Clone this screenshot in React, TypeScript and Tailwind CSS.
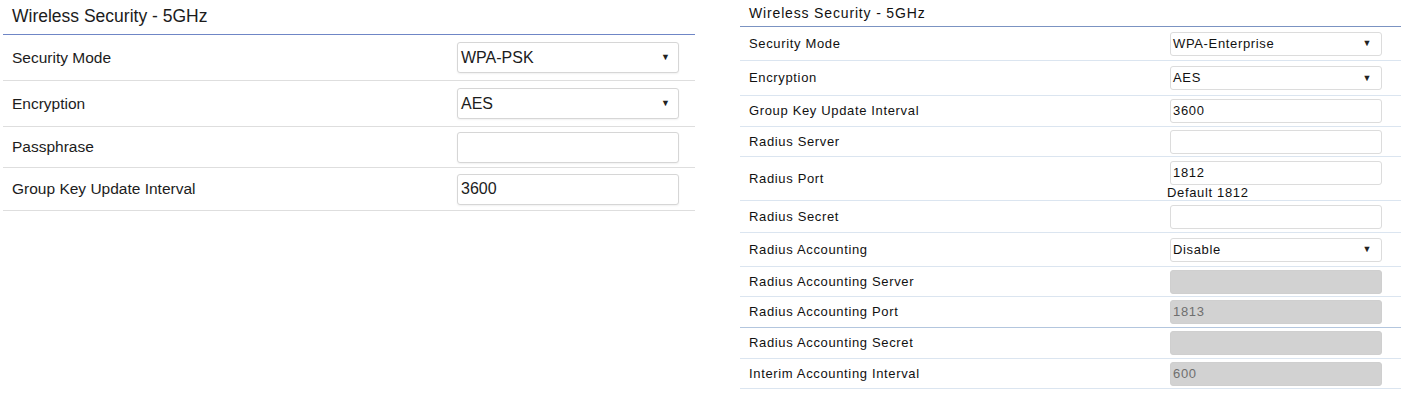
const Arrow = () => <span className="text-[9px] leading-none text-[#222]">▼</span>;

type LeftRow = { label: string; kind: "select" | "input"; value: string; h: string };

const leftRows: LeftRow[] = [
  { label: "Security Mode", kind: "select", value: "WPA-PSK", h: "h-[45px]" },
  { label: "Encryption", kind: "select", value: "AES", h: "h-[45px]" },
  { label: "Passphrase", kind: "input", value: "", h: "h-[40px]" },
  { label: "Group Key Update Interval", kind: "input", value: "3600", h: "h-[42px]" },
];

type RightRow = {
  label: string;
  kind: "select" | "input" | "disabled";
  value: string;
  h: string;
  note?: string;
  line?: string;
};

const rightRows: RightRow[] = [
  { label: "Security Mode", kind: "select", value: "WPA-Enterprise", h: "h-[33px]" },
  { label: "Encryption", kind: "select", value: "AES", h: "h-[34px]" },
  { label: "Group Key Update Interval", kind: "input", value: "3600", h: "h-[30px]" },
  { label: "Radius Server", kind: "input", value: "", h: "h-[29px]" },
  { label: "Radius Port", kind: "input", value: "1812", h: "h-[43px]", note: "Default 1812" },
  { label: "Radius Secret", kind: "input", value: "", h: "h-[31px]" },
  { label: "Radius Accounting", kind: "select", value: "Disable", h: "h-[33px]" },
  { label: "Radius Accounting Server", kind: "disabled", value: "", h: "h-[29px]" },
  { label: "Radius Accounting Port", kind: "disabled", value: "1813", h: "h-[30px]", line: "border-[#b3c6de]" },
  { label: "Radius Accounting Secret", kind: "disabled", value: "", h: "h-[30px]" },
  { label: "Interim Accounting Interval", kind: "disabled", value: "600", h: "h-[29px]" },
];

const LeftPanel = () => (
  <div className="ml-[3px] w-[692px] text-[#1c1c1c]">
    <div className="flex h-[35px] items-center border-b border-[#6f86c6] pb-[1px] pl-[9px] text-[17.5px]">
      Wireless Security - 5GHz
    </div>
    {leftRows.map((r) => (
      <div
        key={r.label}
        className={`flex items-center border-b border-[#dedede] pl-[9px] text-[15.5px] ${r.h} box-content`}
      >
        <div className="flex-1">{r.label}</div>
        <div className="mr-[16px] flex h-[31px] w-[222px] items-center justify-between rounded-[3px] border border-[#d6d6d6] bg-white pl-[3px] pr-[8px] text-[16px] shadow-[0_1px_2px_rgba(0,0,0,0.06)]">
          <span>{r.value}</span>
          {r.kind === "select" && <Arrow />}
        </div>
      </div>
    ))}
  </div>
);

const RightPanel = () => (
  <div className="ml-[45px] flex-1 text-[#111]">
    <div className="flex h-[27px] items-center border-b border-[#7b93c2] pl-[9px] text-[14px] tracking-[0.06em]">
      Wireless Security - 5GHz
    </div>
    {rightRows.map((r) => (
      <div
        key={r.label}
        className={`box-content flex items-center border-b pl-[9px] text-[13px] tracking-[0.05em] ${r.line ?? "border-[#dbe5f0]"} ${r.h}`}
      >
        <div className="flex-1">{r.label}</div>
        <div className={`mr-[19px] w-[212px] ${r.note ? "pt-[5px]" : ""}`}>
          <div
            className={`flex h-[24px] items-center justify-between rounded-[3px] pl-[2px] pr-[9px] ${
              r.kind === "disabled"
                ? "border border-[#cfcfcf] bg-[#d2d2d2] text-[#6f6f6f]"
                : "border border-[#dcdcdc] bg-white"
            }`}
          >
            <span>{r.value}</span>
            {r.kind === "select" && <Arrow />}
          </div>
          {r.note && <div className="-ml-[3px] leading-[16px]">{r.note}</div>}
        </div>
      </div>
    ))}
  </div>
);

export default function App() {
  return (
    <div className="flex h-[399px] w-[1401px] bg-white font-['Liberation_Sans',Arial,sans-serif]">
      <LeftPanel />
      <RightPanel />
    </div>
  );
}
